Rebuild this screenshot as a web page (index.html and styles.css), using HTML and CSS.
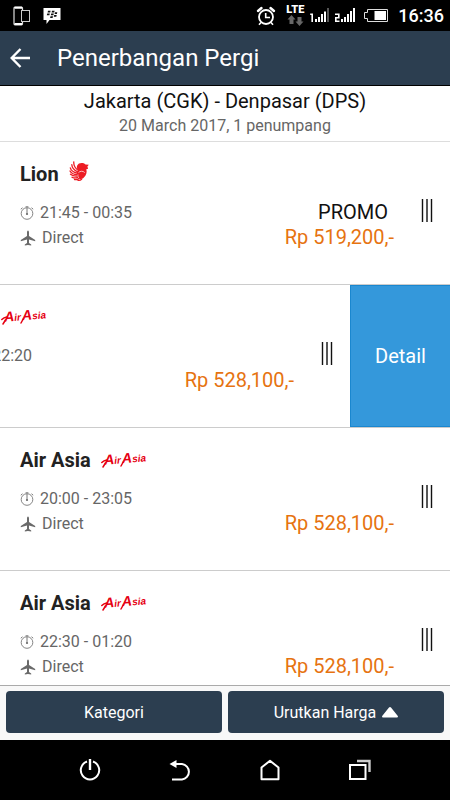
FILE: index.html
```html
<!DOCTYPE html>
<html lang="id">
<head>
<meta charset="utf-8">
<meta name="viewport" content="width=device-width, initial-scale=1">
<title>Penerbangan Pergi</title>
<link rel="stylesheet" href="styles.css">
</head>
<body>
<svg class="defs" aria-hidden="true">
  <symbol id="clock" viewBox="0 0 14 14">
    <g fill="none" stroke="#777" stroke-width="1">
      <circle cx="7" cy="7.5" r="5.8" stroke-width=".9"/>
      <path d="M7 2v5.500M5.600 .8h2.800M.8 3.200 2.500 1.800M13.200 3.200l-1.700-1.400"/>
    </g>
    <circle cx="7" cy="8" r="1.100" fill="#666"/>
  </symbol>
  <symbol id="plane" viewBox="0 0 16 16">
    <path fill="#6a6a6a" d="M8 .5c-.7 0-1 1-1 2v3.600L.8 10v1.300L7 9.600v3.500l-2.200 1.300v1L8 15l3.200.4v-1L9 13.100V9.600l6.200 1.700V10L9 6.100V2.500c0-1-.3-2-1-2z"/>
  </symbol>
  <symbol id="handle" viewBox="0 0 12 24">
    <path fill="none" stroke="#111" stroke-width="1.400" d="M1.500 0v23M6 0v23M10.500 0v23"/>
  </symbol>
  <symbol id="lion" viewBox="0 0 20 20">
    <path fill="#ed1c24" d="M8.200 4.500C9.500 1.800 14 1.200 16.500 3.600l3.300.2-1.400 1.600.7 2.400-1.800.4c1 3-.2 6-2 7.800-1.500 2.600-5 2.400-6.500.4-1.800-2.400-1.200-5.400.8-6.900-1.600-1.200-2.200-3.200-1.400-5z"/>
    <g fill="none" stroke="#ed1c24" stroke-width="1.300" stroke-linecap="round">
      <path d="M4.800 .8c-.4 4 1.700 6.700 4.700 8.700M2.800 3.600c.1 3.800 2.500 5.800 6 7.300M1.300 6.800c.8 3 3.400 4.500 7 5.400M1 10c1.400 2.400 4 3.500 7.200 3.700M1.500 13.200c1.700 1.500 4 2.100 6.700 1.900M3 16.200c1.700.9 3.700 1 5.700.2M5.500 18.500c1.500.4 3.200 0 4.400-.9M9 19.300c1.500.2 2.700-.2 3.600-1"/>
    </g>
    <path d="M9.500 11.600c1.500-1.700 4.500-1.900 6.200 0M9 13.500c-.3 1.500 0 2.500.9 3.500" fill="none" stroke="#fff" stroke-width=".7"/>
  </symbol>
  <symbol id="swash" viewBox="0 0 48 24">
    <path fill="none" stroke="#e60012" stroke-width="1.500" stroke-linecap="round" d="M4.500 18 2 22M.8 17.500q2-2 5-2.500M22.500 16.500l-2.500 4.500"/>
  </symbol>
</svg>

<div class="status">
  <div class="status-group">
    <svg width="18" height="20" viewBox="0 0 18 20" fill="none" stroke="#fff" aria-hidden="true">
      <path stroke="#ddd" stroke-width="1.200" d="M9.500 4V2.200Q9.500 1.200 8.500 1.200H2Q1 1.200 1 2.200v15.600q0 1 1 1h6.500q1 0 1-1V16"/>
      <path stroke-width="2" d="M1.500 1.800h7.500M1.500 18h7.500"/>
      <rect x="8.500" y="4.500" width="8" height="11" stroke="#ccc"/>
    </svg>
    <svg width="18" height="18" viewBox="0 0 18 18" aria-hidden="true">
      <path fill="#fff" d="M.5 1h17v12H6.500L3.500 17v-4h-3z"/>
      <path fill="#111" d="M5 3.700h2.600l-.4 1.800H4.600zM9 3.700h2.600l-.4 1.800H8.600zM4.200 6.500h2.600l-.4 1.800H3.800zM8.200 6.500h2.600l-.4 1.800H7.800zM12 5.200h2.300l-.4 1.700h-2.300zM7.500 9.200H10L9.600 11H7.100zM11.200 8h2.500l-.4 1.800h-2.500z"/>
    </svg>
  </div>
  <div class="status-group status-right">
    <svg class="alarm" width="20" height="20" viewBox="0 0 20 20" fill="none" stroke="#fff" aria-hidden="true">
      <circle cx="10" cy="11" r="7" stroke-width="1.800"/>
      <path stroke-width="1.600" d="M9.700 7v4.500H14M5 16.500l-2 2.300M15 16.500l2 2.300"/>
      <path stroke-width="2.400" stroke-linecap="round" d="M2 5 5.500 2M18 5l-3.500-3"/>
    </svg>
    <div class="lte">
      <span>LTE</span>
      <svg width="18" height="11" viewBox="0 0 18 11" fill="#666" aria-hidden="true"><path d="m5.500 0 4 4.500h-2V9h-4V4.500h-2zM13.500 11l-4-4.500h2V2h4v4.500h2z"/></svg>
    </div>
    <svg width="19" height="15" viewBox="0 0 19 15" aria-hidden="true">
      <path fill="none" stroke="#fff" stroke-width="1.600" d="M.2 6.200h2V14"/>
      <path fill="#fff" d="M5 11h2v3H5zM8 9h2v5H8zM11 6h2v8h-2zM14 3.500h2V14h-2z"/>
      <path fill="#555" d="M17 0h2v14h-2z"/>
    </svg>
    <svg width="20" height="15" viewBox="0 0 20 15" aria-hidden="true">
      <path fill="none" stroke="#fff" stroke-width="1.600" d="M0 6.200h3.800v3.500H.8v3.500h3.700"/>
      <path fill="#fff" d="M6 11h2v3H6zM9 9h2v5H9zM12 6h2v8h-2zM15 3h2v11h-2zM18 0h2v14h-2z"/>
    </svg>
    <svg class="battery" width="24" height="14" viewBox="0 0 24 14" aria-hidden="true">
      <path fill="none" stroke="#ddd" d="M3.500.5h20v12h-20V9.500h-3v-6h3z"/>
      <path fill="#fff" d="M10.500 2H22v9H10.500z"/>
    </svg>
    <time>16:36</time>
  </div>
</div>

<header class="bar">
  <button class="back" type="button" aria-label="Kembali">
    <svg width="20" height="20" viewBox="0 0 20 20" fill="none" stroke="#fff" stroke-width="2.400" aria-hidden="true"><path d="M20 10H2M10.500 1 1.700 10l8.800 9"/></svg>
  </button>
  <h1>Penerbangan Pergi</h1>
</header>

<section class="route">
  <h2>Jakarta (CGK) - Denpasar (DPS)</h2>
  <p>20 March 2017, 1 penumpang</p>
</section>

<main class="flights">
  <article class="flight">
    <div class="info">
      <h3>Lion <svg class="lion" role="img" aria-label="Lion Air"><use href="#lion"/></svg></h3>
      <p><svg class="clock" aria-hidden="true"><use href="#clock"/></svg>21:45 - 00:35</p>
      <p><svg class="plane" aria-hidden="true"><use href="#plane"/></svg>Direct</p>
    </div>
    <div class="fare"><span class="promo">PROMO</span><span class="price">Rp 519,200,-</span></div>
    <svg class="handle" aria-hidden="true"><use href="#handle"/></svg>
  </article>

  <article class="flight swiped">
    <div class="info">
      <h3>Air Asia <svg class="airasia" viewBox="0 0 48 24"><g transform="rotate(-5 24 14)"><text x="3" y="18"><tspan class="cap">A</tspan>ir</text><text x="21" y="18"><tspan class="cap">A</tspan>sia</text></g><use href="#swash"/></svg></h3>
      <p><svg class="clock" aria-hidden="true"><use href="#clock"/></svg>19:30 - 22:20</p>
      <p><svg class="plane" aria-hidden="true"><use href="#plane"/></svg>Direct</p>
    </div>
    <div class="fare"><span class="price">Rp 528,100,-</span></div>
    <svg class="handle" aria-hidden="true"><use href="#handle"/></svg>
    <button class="detail" type="button">Detail</button>
  </article>

  <article class="flight">
    <div class="info">
      <h3>Air Asia <svg class="airasia" viewBox="0 0 48 24"><g transform="rotate(-5 24 14)"><text x="3" y="18"><tspan class="cap">A</tspan>ir</text><text x="21" y="18"><tspan class="cap">A</tspan>sia</text></g><use href="#swash"/></svg></h3>
      <p><svg class="clock" aria-hidden="true"><use href="#clock"/></svg>20:00 - 23:05</p>
      <p><svg class="plane" aria-hidden="true"><use href="#plane"/></svg>Direct</p>
    </div>
    <div class="fare"><span class="price">Rp 528,100,-</span></div>
    <svg class="handle" aria-hidden="true"><use href="#handle"/></svg>
  </article>

  <article class="flight">
    <div class="info">
      <h3>Air Asia <svg class="airasia" viewBox="0 0 48 24"><g transform="rotate(-5 24 14)"><text x="3" y="18"><tspan class="cap">A</tspan>ir</text><text x="21" y="18"><tspan class="cap">A</tspan>sia</text></g><use href="#swash"/></svg></h3>
      <p><svg class="clock" aria-hidden="true"><use href="#clock"/></svg>22:30 - 01:20</p>
      <p><svg class="plane" aria-hidden="true"><use href="#plane"/></svg>Direct</p>
    </div>
    <div class="fare"><span class="price">Rp 528,100,-</span></div>
    <svg class="handle" aria-hidden="true"><use href="#handle"/></svg>
  </article>
</main>

<footer class="actions">
  <button type="button">Kategori</button>
  <button type="button">Urutkan Harga <svg width="16" height="11" viewBox="0 0 16 11" aria-hidden="true"><path fill="#fff" d="M8 0q.6 0 1 .5l6.800 8.500q.6 1.500-.8 1.500H1q-1.400 0-.8-1.500L7 .5Q7.400 0 8 0z"/></svg></button>
</footer>

<nav class="softkeys">
  <button type="button" aria-label="Daya"><svg width="24" height="24" viewBox="0 0 24 24" fill="none" stroke="#fff" stroke-width="2" aria-hidden="true"><path d="M9 3.500a9.200 9.200 0 1 0 6 0" /><path stroke-width="2.400" d="M12 1v11"/></svg></button>
  <button type="button" aria-label="Kembali"><svg width="24" height="24" viewBox="0 0 24 24" aria-hidden="true"><path fill="none" stroke="#fff" stroke-width="2" d="M6 6h8a7.800 7.800 0 0 1 0 15.500H4"/><path fill="#fff" d="M1.500 6 8.500 2v8z"/></svg></button>
  <button type="button" aria-label="Beranda"><svg width="24" height="24" viewBox="0 0 24 24" fill="none" stroke="#fff" stroke-width="2" stroke-linejoin="round" aria-hidden="true"><path d="M3.500 9.500 12 2.800l8.500 6.700v11.700h-17z"/></svg></button>
  <button type="button" aria-label="Aplikasi terbaru"><svg width="24" height="24" viewBox="0 0 24 24" fill="none" stroke="#fff" stroke-width="2" aria-hidden="true"><path d="M2 7h15.500v14H2z"/><path stroke="#ccc" stroke-width="2.400" d="M9 3h12.500v11"/></svg></button>
</nav>
</body>
</html>
```
FILE: styles.css
```css
* {
  box-sizing: border-box;
}

body {
  margin: 0;
  height: 100vh;
  display: flex;
  flex-direction: column;
  overflow: hidden;
  background: #fff;
  color: #111;
  font-family: Roboto, "Liberation Sans", sans-serif;
}

h1, h2, h3, p {
  margin: 0;
  font-weight: 400;
}

button {
  margin: 0;
  padding: 0;
  border: 0;
  background: none;
  color: #fff;
  font: inherit;
}

svg {
  flex: none;
}

.defs {
  position: absolute;
  width: 0;
  height: 0;
}

.status {
  flex: none;
  height: 31px;
  padding: 0 6px 0 13px;
  display: flex;
  align-items: center;
  justify-content: space-between;
  background: #000;
  color: #fff;
}

.status-group {
  display: flex;
  align-items: center;
  gap: 12px;
}

.status-right {
  gap: 6px;
}

.alarm {
  margin-right: 4px;
}

.battery {
  margin: 0 4px 0 3px;
}

.lte {
  display: flex;
  flex-direction: column;
  align-items: center;
  font-size: 11px;
  font-weight: 900;
  line-height: 10px;
}

.status time {
  font-size: 18px;
  font-weight: 500;
}

.bar {
  flex: none;
  height: 55px;
  padding: 0 10px;
  display: flex;
  align-items: center;
  gap: 27px;
  background: #2c3e50;
  border-bottom: 1px solid #000;
  color: #fff;
}

.back {
  display: flex;
}

.bar h1 {
  font-size: 24px;
  line-height: 28px;
}

.route {
  flex: none;
  padding: 2px 10px 3px;
  border-bottom: 1px solid #ddd;
  text-align: center;
}

.route h2 {
  font-size: 20px;
  line-height: 26px;
}

.route p {
  color: #666;
  font-size: 16px;
  line-height: 24px;
}

.flights {
  flex: 1;
  min-height: 0;
  overflow: hidden;
}

.flight {
  display: flex;
  align-items: flex-start;
  padding: 18px 17px 34px 20px;
  border-bottom: 1px solid #ccc;
}

.info {
  flex: 1;
}

.info h3 {
  display: flex;
  align-items: center;
  gap: 10px;
  height: 28px;
  margin-bottom: 12px;
  font-size: 20px;
  font-weight: 700;
  white-space: nowrap;
  color: #222;
}

.info p {
  display: flex;
  align-items: center;
  gap: 6px;
  color: #666;
  font-size: 16px;
  line-height: 25px;
  white-space: nowrap;
}

.lion {
  width: 20px;
  height: 20px;
  margin-bottom: 6px;
}

.airasia {
  width: 48px;
  height: 24px;
  margin-bottom: 6px;
  overflow: visible;
  fill: #e60012;
  font-family: "Liberation Sans", sans-serif;
  font-size: 10px;
  font-style: italic;
  font-weight: 700;
}

.cap {
  font-size: 14px;
}

.clock {
  width: 14px;
  height: 14px;
}

.plane {
  width: 16px;
  height: 16px;
}

.fare {
  align-self: flex-end;
  display: flex;
  flex-direction: column;
  align-items: flex-end;
  margin-right: 27px;
  font-size: 20px;
  line-height: 25px;
}

.promo {
  margin-right: 6px;
}

.price {
  color: #e67310;
}

.handle {
  width: 12px;
  height: 24px;
  margin-top: 39px;
}

.swiped {
  position: relative;
  padding-right: 117px;
}

.swiped .info {
  margin-left: -100px;
}

.detail {
  position: absolute;
  top: 0;
  right: 0;
  bottom: 0;
  width: 100px;
  background: #3498db;
  border: 1px solid #1a87cf;
  border-right: 0;
  font-size: 20px;
}

.actions {
  flex: none;
  display: flex;
  gap: 6px;
  padding: 5px 6px 7px;
  border-top: 1px solid #aaa;
  background: #f8f8f8;
}

.actions button {
  flex: 1;
  display: flex;
  align-items: center;
  justify-content: center;
  gap: 6px;
  height: 42px;
  border-radius: 4px;
  background: #2c3e50;
  font-size: 16px;
}

.softkeys {
  flex: none;
  display: grid;
  grid-template-columns: repeat(4, 1fr);
  height: 60px;
  padding: 0 45px;
  background: #000;
}

.softkeys button {
  display: flex;
  align-items: center;
  justify-content: center;
}
```
